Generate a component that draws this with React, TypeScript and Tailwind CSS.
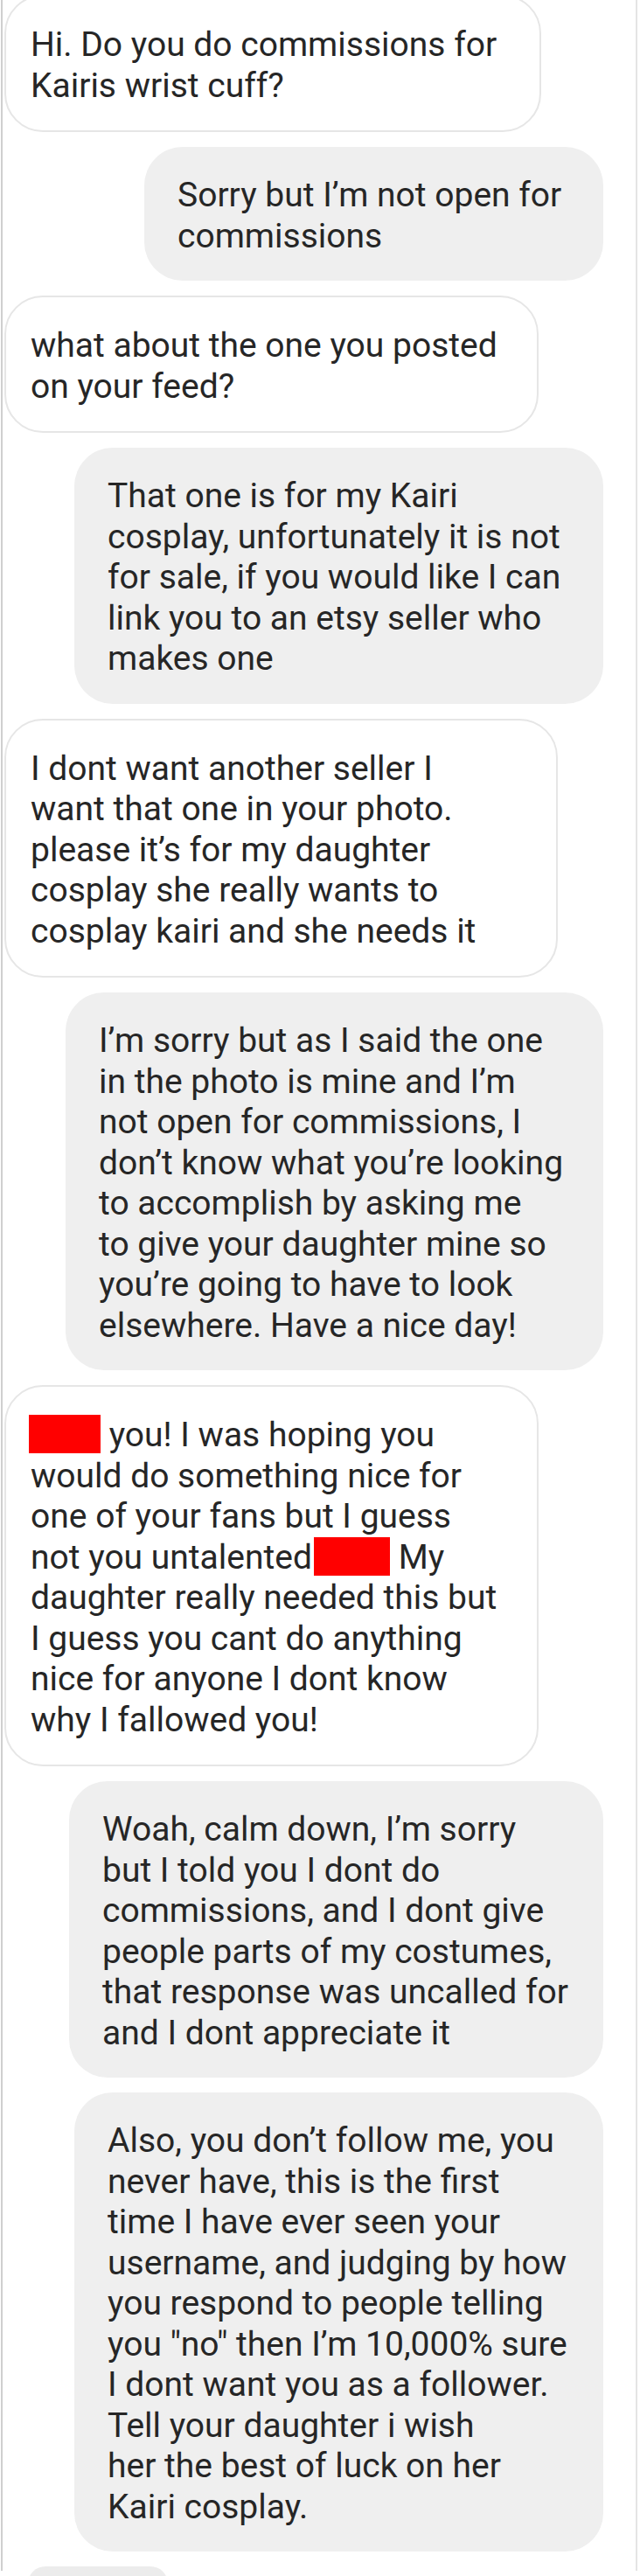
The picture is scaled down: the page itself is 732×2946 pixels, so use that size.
import React from "react";

type Msg = {
  mine: boolean;
  width: string;
  lines: React.ReactNode[];
};

function Redacted({ w }: { w: string }) {
  return <span className={`inline-block h-[44px] align-top bg-[#ff0000] ${w}`} />;
}

const messages: Msg[] = [
  {
    mine: false,
    width: "w-[614px]",
    lines: ["Hi. Do you do commissions for", "Kairis wrist cuff?"],
  },
  {
    mine: true,
    width: "w-[525px]",
    lines: ["Sorry but I’m not open for", "commissions"],
  },
  {
    mine: false,
    width: "w-[611px]",
    lines: ["what about the one you posted", "on your feed?"],
  },
  {
    mine: true,
    width: "w-[605px]",
    lines: [
      "That one is for my Kairi",
      "cosplay, unfortunately it is not",
      "for sale, if you would like I can",
      "link you to an etsy seller who",
      "makes one",
    ],
  },
  {
    mine: false,
    width: "w-[633px]",
    lines: [
      "I dont want another seller I",
      "want that one in your photo.",
      "please it’s for my daughter",
      "cosplay she really wants to",
      "cosplay kairi and she needs it",
    ],
  },
  {
    mine: true,
    width: "w-[615px]",
    lines: [
      "I’m sorry but as I said the one",
      "in the photo is mine and I’m",
      "not open for commissions, I",
      "don’t know what you’re looking",
      "to accomplish by asking me",
      "to give your daughter mine so",
      "you’re going to have to look",
      "elsewhere. Have a nice day!",
    ],
  },
  {
    mine: false,
    width: "w-[611px]",
    lines: [
      <>
        <Redacted w="w-[82px] -ml-[2px]" /> you! I was hoping you
      </>,
      "would do something nice for",
      "one of your fans but I guess",
      <>
        not you untalented
        <Redacted w="w-[87px] ml-[2px]" /> My
      </>,
      "daughter really needed this but",
      "I guess you cant do anything",
      "nice for anyone I dont know",
      "why I fallowed you!",
    ],
  },
  {
    mine: true,
    width: "w-[611px]",
    lines: [
      "Woah, calm down, I’m sorry",
      "but I told you I dont do",
      "commissions, and I dont give",
      "people parts of my costumes,",
      "that response was uncalled for",
      "and I dont appreciate it",
    ],
  },
  {
    mine: true,
    width: "w-[605px]",
    lines: [
      "Also, you don’t follow me, you",
      "never have, this is the first",
      "time I have ever seen your",
      "username, and judging by how",
      "you respond to people telling",
      "you \"no\" then I’m 10,000% sure",
      "I dont want you as a follower.",
      "Tell your daughter i wish",
      "her the best of luck on her",
      "Kairi cosplay.",
    ],
  },
];

function Bubble({ msg }: { msg: Msg }) {
  const base = "rounded-[44px] pt-[32px] pb-[28px] " + msg.width;
  const cls = msg.mine
    ? `${base} ml-auto mr-[37px] bg-[#efefef] pl-[38px]`
    : `${base} ml-[2px] bg-white border-2 border-[#e6e6e6] pl-[28px]`;
  return (
    <div className={cls}>
      {msg.lines.map((line, i) => (
        <div key={i} className="whitespace-nowrap">
          {line}
        </div>
      ))}
    </div>
  );
}

export default function App() {
  return (
    <div className="h-[2946px] overflow-hidden bg-white">
      <div
        className="h-full ml-[1px] mr-[3px] border-l-2 border-l-[#cfcfcf] border-r-2 border-r-[#e4e4e4] text-[39px] leading-[46.5px] text-[#262626]"
        style={{ fontFamily: "Roboto, 'Noto Sans', sans-serif" }}
      >
        <div className="-mt-[6px] flex flex-col gap-[17px]">
          {messages.map((m, i) => (
            <Bubble key={i} msg={m} />
          ))}
          <div className="ml-[29px] h-[40px] w-[160px] rounded-t-[20px] bg-[#ececec]" />
        </div>
      </div>
    </div>
  );
}
